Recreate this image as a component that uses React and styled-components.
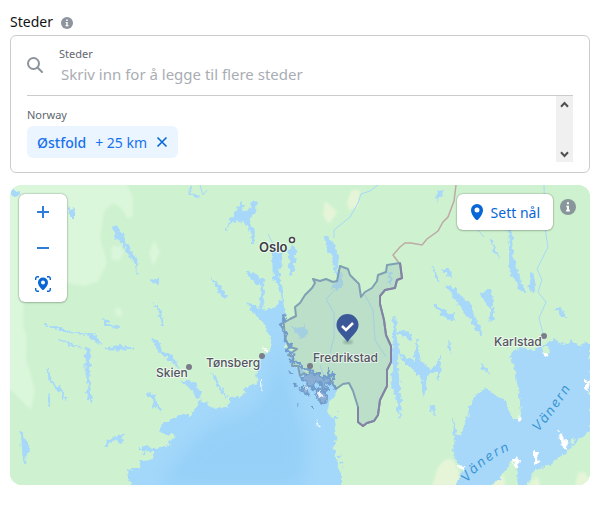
import React from "react";
import styled, { createGlobalStyle } from "styled-components";

const GlobalStyle = createGlobalStyle`
  * { box-sizing: border-box; }
  body {
    margin: 0;
    background: #fff;
    color: #111;
    font-family: "Noto Sans", "Open Sans", sans-serif;
  }
  button, input { font: inherit; }
  button { border: 0; padding: 0; cursor: pointer; }
`;

const Page = styled.main`
  padding: 8px 22px 32px 10px;
`;

const Heading = styled.h1`
  display: flex;
  align-items: center;
  gap: 8px;
  margin: 0;
  height: 27px;
  font-size: 14px;
  font-weight: 400;
`;

const InfoButton = styled.button`
  display: flex;
  margin-top: ${(p) => (p.$size > 12 ? "5px" : "3px")};
  border-radius: 50%;
  background: none;
`;

const Card = styled.section`
  border: 1px solid #ccc;
  border-radius: 6px;
  padding: 0 16px 10px;
`;

const SearchRow = styled.div`
  display: flex;
  align-items: center;
  gap: 16px;
  height: 60px;
  padding-bottom: 2px;
  border-bottom: 1px solid #ccc;
`;

const SearchField = styled.div`
  flex: 1;
  display: flex;
  flex-direction: column;
  padding-top: 3px;
`;

const FieldLabel = styled.label`
  color: #606770;
  font-size: 11px;
  line-height: 16px;
`;

const SearchInput = styled.input`
  width: 100%;
  height: 24px;
  border: 0;
  padding: 0 2px;
  outline: 0;
  background: none;
  font-size: 15px;
  &::placeholder { color: #a9adb3; opacity: 1; }
`;

const Results = styled.div`
  display: flex;
  justify-content: space-between;
  height: 66px;
`;

const Group = styled.div`
  padding-top: 10px;
`;

const Country = styled.div`
  color: #606770;
  font-size: 11px;
  line-height: 18px;
  padding-bottom: 2px;
`;

const Chip = styled.div`
  display: flex;
  align-items: center;
  height: 32px;
  padding: 0 10px;
  border-radius: 6px;
  background: #ebf5ff;
  color: #1771ed;
  font-size: 14px;
`;

const ChipName = styled.span`
  margin-right: 9px;
  font-weight: 500;
`;

const ChipRemove = styled.button`
  display: flex;
  margin-left: 9px;
  background: none;
`;

const ScrollTrack = styled.div`
  display: flex;
  flex-direction: column;
  justify-content: space-between;
  width: 17px;
  background: #f0f0f0;
`;

const ScrollButton = styled.button`
  display: flex;
  align-items: center;
  justify-content: center;
  height: 16px;
  background: none;
`;

const MapPanel = styled.section`
  position: relative;
  height: 300px;
  margin-top: 12px;
  border-radius: 12px;
  overflow: hidden;
  background: #cef2cf;
`;

const MapDrawing = styled.svg`
  display: block;
  width: 100%;
  height: 100%;
`;

const MapTools = styled.div`
  position: absolute;
  top: 9px;
  left: 9px;
  display: flex;
  flex-direction: column;
  width: 48px;
  border-radius: 6px;
  background: #fff;
  box-shadow: 0 0 2px rgba(0, 0, 0, 0.4), 0 1px 2px rgba(0, 0, 0, 0.15);
`;

const ToolButton = styled.button`
  display: flex;
  align-items: center;
  justify-content: center;
  height: 36px;
  background: none;
`;

const PinControls = styled.div`
  position: absolute;
  top: 9px;
  right: 14px;
  display: flex;
  align-items: flex-start;
  gap: 7px;
`;

const PinButton = styled.button`
  display: flex;
  align-items: center;
  gap: 8px;
  height: 36px;
  padding: 0 13px 0 14px;
  border-radius: 6px;
  background: #fff;
  color: #0866d6;
  font-size: 14px;
  box-shadow: 0 0 2px rgba(0, 0, 0, 0.4), 0 1px 2px rgba(0, 0, 0, 0.15);
`;

const CityLabel = styled.text`
  font-family: Inter, "Liberation Sans", sans-serif;
  font-size: ${(p) => (p.$capital ? "13px" : "12px")};
  font-weight: ${(p) => (p.$capital ? 600 : 500)};
  fill: ${(p) => (p.$capital ? "#3c3c48" : "#565563")};
  stroke: #fff;
  stroke-opacity: 0.6;
  stroke-width: 2px;
  stroke-linejoin: round;
  paint-order: stroke;
`;

const WaterLabel = styled.text`
  font-family: Inter, "Liberation Sans", sans-serif;
  font-size: 13px;
  font-style: italic;
  letter-spacing: 2px;
  fill: #3b94d3;
`;

function InfoIcon({ size, color }) {
  return (
    <svg width={size} height={size} viewBox="0 0 12 12" aria-hidden="true">
      <circle cx="6" cy="6" r="6" fill={color} />
      <path d="M4.700 5h2v3.100h.7V9.300H4.600V8.100h.7V6.100h-.6zM5.200 2.500h1.500V4H5.200z" fill="#fff" />
    </svg>
  );
}

function SearchIcon() {
  return (
    <svg width="16" height="16" viewBox="0 0 16 16" fill="none" stroke="#8d949e" strokeWidth="2" aria-hidden="true">
      <circle cx="6.500" cy="6.500" r="5.500" />
      <path d="M10.500 10.500 15 15" strokeLinecap="round" />
    </svg>
  );
}

function Chevron({ down }) {
  return (
    <svg width="9" height="7" viewBox="0 0 9 7" fill="none" stroke="#505050" strokeWidth="2" aria-hidden="true">
      <path d={down ? "M1 1.200 4.500 5 8 1.200" : "M1 5.800 4.500 2 8 5.800"} />
    </svg>
  );
}

function PinIcon() {
  return (
    <svg width="12" height="16" viewBox="0 0 12 16" aria-hidden="true">
      <path
        fill="#0866d6"
        fillRule="evenodd"
        d="M6 0a6 6 0 0 0-6 6c0 4 3.400 8.200 4.900 9.600a1.600 1.600 0 0 0 2.200 0C8.600 14.200 12 10 12 6a6 6 0 0 0-6-6Zm0 3.500a2.500 2.500 0 1 1 0 5 2.500 2.500 0 0 1 0-5Z"
      />
    </svg>
  );
}

function LocateIcon() {
  return (
    <svg width="16" height="16" viewBox="0 0 16 16" aria-hidden="true">
      <path
        d="M.7 4V2.500A1.800 1.800 0 0 1 2.500.7H4M12 .7h1.500a1.800 1.800 0 0 1 1.800 1.800V4M15.300 12v1.500a1.800 1.800 0 0 1-1.800 1.800H12M4 15.300H2.500A1.800 1.800 0 0 1 .7 13.500V12"
        fill="none"
        stroke="#0866d6"
        strokeWidth="1.400"
      />
      <path
        fill="#0866d6"
        fillRule="evenodd"
        d="M8 1.500a5 5 0 0 0-5 5c0 3 2.500 5.400 4.200 7.200q.8.700 1.600 0C10.500 11.900 13 9.500 13 6.500a5 5 0 0 0-5-5Zm0 3a2 2 0 1 1 0 4 2 2 0 0 1 0-4Z"
      />
    </svg>
  );
}

const SEA =
  "M130 487 128 470 140 468 139 462 150 460 155 451 140 450 140 446 153 448 166 448 175 435 160 434 162 424 176 418 178 415 190 415 198 405 201 399 212 408 227 407 229 398 242 397 245 387 257 383 256 372 262 357 270 350 272 342 268 333 265 325 255 315 247 302 261 310 275 307 282 300 279 284 273 279 272 256 269 252 280 253 284 252 279 276 283 290 283 302 286 316 281 326 286 339 284 347 293 352 292 364 302 369 307 378 318 383 330 378 335 388 341 384 329 403 328 412 334 420 336 438 334 448 338 468 342 475 342 487Z";

const DEEP_SEA =
  "M156 487 190 442 218 420 248 412 266 390 275 350 278 330 283 355 291 381 300 412 306 430 308 448 304 487Z";

const LAKE_VANERN =
  "M590 341 580 345 572 340 563 345 554 339 546 344 534 350 521 348 510 352 512 361 516 375 520 402 521 422 512 418 504 400 493 394 485 387 475 396 471 404 466 422 460 435 455 432 453 444 455 462 463 466 456 487 490 487 500 478 508 466 518 462 517 487 527 487 533 472 548 465 564 454 575 444 590 431Z";

const LAKES = [
  "M112 227 117 226 120 232 132 253 137 259 137 275 135 263 125 249 120 239 115 238 118 234Z",
  "M226 231 231 218 242 201 243 212 249 210 253 201 257 202 255 213 249 219 252 226 255 233 255 240 252 243 250 231 245 223 236 221 230 224Z",
  "M102 318 113 326 120 327 113 328 106 324Z",
  "M44 325 54 326 70 332 85 334 85 335 65 332Z",
  "M86 332 95 336 103 346 92 339Z",
  "M105 348 117 346 133 348 120 350 112 350Z",
  "M58 339 74 345 82 348 70 345Z",
  "M154 304 161 311 163 326 161 324 160 313Z",
  "M151 279 159 278 158 285 152 283Z",
  "M86 347 90 348 89 375 90 391 92 401 87 398 88 386 86 373Z",
  "M48 369 51 380 61 389 67 402 63 398 57 389 49 380Z",
  "M47 394 49 394 50 408 48 404Z",
  "M21 430 25 439 29 446 26 456 25 465 23 455Z",
  "M151 337 157 340 161 351 169 353 179 368 169 360 160 353Z",
  "M180 381 193 382 199 389 200 397 195 396 191 388Z",
  "M147 394 154 395 156 404 161 409 153 407 154 401Z",
  "M106 441 122 434 123 441 119 443 117 438 109 443 106 446Z",
  "M245 271 254 273 264 282 264 296 262 314 260 307 261 285 252 280Z",
  "M211 278 220 286 228 298 223 298Z",
  "M190 186 191 194 199 195 199 198 190 194Z",
  "M287 251 293 247 296 250 293 274 290 275 289 260Z",
  "M324 237 328 236 334 246 338 260 337 276 334 268 334 257 327 248Z",
  "M10 187 20 195 12 197Z",
  "M70 207 76 214 72 218 69 213Z",
  "M213 373 220 387 227 398 222 392 216 384Z",
  "M437 191 443 191 440 196 437 202Z",
  "M509 226 511 230 513 258 517 273 526 293 521 290 510 272Z",
  "M530 273 533 273 535 294 528 288 531 283Z",
  "M490 238 499 258 495 253Z",
  "M432 267 440 281 436 278Z",
  "M441 269 451 270 451 277 444 272Z",
  "M446 284 455 289 471 306 472 312 483 335 480 335 471 320 461 308Z",
  "M480 294 491 288 494 321 489 321 491 309Z",
  "M435 304 449 315 455 313 452 321 437 310Z",
  "M555 311 560 306 566 319 562 315 558 310Z",
  "M481 362 488 372 489 374 482 368Z",
  "M449 341 452 352 449 350Z",
  "M417 339 420 360 431 370 437 365 441 355 439 381 437 370 426 377 425 397 423 395 422 379 401 358 401 354 414 362Z",
  "M431 406 435 407 433 415Z",
  "M453 419 455 426 457 435 453 435Z",
  "M394 315 396 322 396 332 399 349 397 365 401 399 399 418 396 398 392 383 393 352Z",
  "M395 331 409 332 411 341 404 336Z",
  "M388 274 391 272 391 284 389 284Z",
  "M290 325 298 330 305 325 307 336 301 337 296 333Z",
  "M337 281 340 270 342 286 337 290 333 287Z",
];

const STREAMS = [
  "M334 238 334 230 350 217 358 203 361 194 370 191 378 185",
  "M338 287 326 299 334 313 334 337 330 353",
  "M365 295 373 310 375 340 386 357",
  "M544 185 545 228 548 247 537 269 542 280 538 292 546 302 539 318 544 337",
  "M200 185 203 195 207 190",
  "M478 230 484 237",
  "M268 234 276 250 280 262",
  "M320 365 325 379",
];

const COUNTY =
  "M283 315 285 322 290 319 296 316 295 307 300 303 305 295 312 288 315 283 313 279 320 281 326 279 333 282 337 281 340 266 348 269 350 275 359 284 361 297 365 292 372 288 377 281 378 275 386 272 387 265 400 263 402 278 397 280 395 288 385 290 380 296 380 304 384 320 386 335 391 346 391 362 387 370 387 386 380 400 378 415 374 421 367 423 363 426 358 422 358 407 353 391 349 383 343 384 336 389 332 383 329 377 324 382 317 374 311 379 304 373 300 376 298 366 292 366 293 357 288 355 297 349 289 347 285 338Z";

const EAST_BORDER =
  "M400 263 402 278 397 280 395 288 385 290 380 296 380 304 384 320 386 335 391 346 391 362 387 370 387 386 380 400 378 415 374 421 367 423 363 426 358 422 358 407";

const COUNTY_COAST =
  "M283 314 285 320 281 325 284 331 287 335 285 341 291 345 286 350 294 355 291 362 299 362 302 370 311 369 309 379 317 374 319 384 328 381 329 371 334 379 333 385 337 388";

const ISLANDS =
  "M301 379l5 2 1 6 5-1 2 5 6-3 2 5 5-3-2-5 5-3-1-6-6 3-4-5-5 1-2-4zM313 386l4-5 5 3 1 8-6 3zM317 391l7-1 4 6-3 9-6-4zM292 383l5 4M300 390l6-4 2 9zM288 371l5 3M296 405l3 1M311 407l3 0";

const SHALLOWS =
  "M315 420l3 3 3 5-4-3zM262 347l5 2 2 3-4 0zM261 381l1 0 1 10-2 1zM534 451l5 0-1 12-4 3zM558 430l4 3 2 8 4-1-1 10-6-5zM543 352l6 3-4 3zM519 414l3 4-2 4-3-1zM585 380l5 1-2 12-3-5zM513 460l6-2-1 10-4-3zM457 465l9 1-4 6z";

const CITIES = [
  { name: "Oslo", x: 259, y: 252, dotX: 292, dotY: 240, capital: true },
  { name: "Tønsberg", x: 206, y: 367, dotX: 262, dotY: 356 },
  { name: "Skien", x: 156, y: 377, dotX: 189, dotY: 367 },
  { name: "Fredrikstad", x: 313, y: 362, dotX: 310, dotY: 366 },
  { name: "Karlstad", x: 494, y: 346, dotX: 544, dotY: 336 },
];

function RegionMap() {
  return (
    <MapDrawing viewBox="10 185 580 300" preserveAspectRatio="xMidYMid slice" role="img" aria-label="Kart over Østfold">
      <defs>
        <filter id="coast" x="-5%" y="-5%" width="110%" height="110%" colorInterpolationFilters="sRGB">
          <feTurbulence type="fractalNoise" baseFrequency="0.22" numOctaves="2" seed="4" />
          <feDisplacementMap in="SourceGraphic" scale="7" xChannelSelector="R" yChannelSelector="G" />
        </filter>
        <filter id="soft" x="-20%" y="-20%" width="140%" height="140%"><feGaussianBlur stdDeviation="9" /></filter>
        <filter id="edge"><feGaussianBlur stdDeviation="1" /></filter>
        <path id="vanern-west" d="M467 483Q484 459 520 446" />
        <path id="vanern-east" d="M538 432Q558 410 578 376" />
        <clipPath id="sea-clip"><path d={SEA} /></clipPath>
      </defs>
      <rect x="10" y="185" width="580" height="300" fill="#cef2cf" />
      <g filter="url(#edge)">
        <path
          fill="#daf6db"
          d="M8 183H126L133 197 133 216 128 219 121 208 113 203 104 211 100 238 107 262 98 282 84 286 66 283 24 303 23 325 27 338 26 358 35 390 31 410 8 387Z"
        />
        <path fill="#daf6db" d="M112 246l9 0 2 8-4 7-8-2zM154 240l6 12-7 14-4-13zM115 308l6 0 1 8-6 0z" />
        <path
          fill="#e6f5d8"
          d="M325 201 337 212 329 224 323 215ZM352 190 360 190 358 207 349 210 347 202ZM432 487 438 467 445 460 452 459 458 470 461 487ZM497 480 504 475 505 487 492 487ZM527 487 537 476 541 487ZM575 487 578 473 584 472 590 480 590 487Z"
        />
      </g>
      <g filter="url(#coast)">
        <path d={SEA} fill="#a4d8fa" />
        <path d={LAKE_VANERN} fill="#a7d8f9" />
        {LAKES.map((d) => <path key={d} d={d} fill="#a7d8f9" stroke="#a7d8f9" strokeWidth="1" />)}
        <path d="M508 464l7-3 3 6-2 6-7-1zM543 347l5 0 1 5-4 2zM568 441l7-3-3 8z" fill="#cef2cf" />
        <path
          d="M166 432l4-5 8-2M132 480l11-8 6 0M142 454l8-3M338 410l-5 14M332 432l4 11M339 455l3 12"
          stroke="#a4d8fa"
          strokeWidth="3"
          strokeDasharray="3 3"
          fill="none"
        />
        <path d={SHALLOWS} fill="#fff" />
      </g>
      <g clipPath="url(#sea-clip)">
        <path d={DEEP_SEA} fill="#96d0f8" filter="url(#soft)" />
      </g>
      <g fill="none" stroke="#a7d8f9">
        {STREAMS.map((d) => <path key={d} d={d} />)}
      </g>
      <path
        d="M456 185 454 201 448 217 443 222 438 231 427 239 422 245 411 243 405 243 400 247 393 255 399 263"
        fill="none"
        stroke="#bda9a5"
        strokeWidth="1.500"
      />
      <path d={COUNTY} fill="#a1c4bd" fillOpacity="0.4" stroke="#7f9fb5" strokeWidth="2" strokeLinejoin="round" />
      <path d={EAST_BORDER} fill="none" stroke="#8582a3" strokeWidth="2" />
      <g filter="url(#coast)">
        <path d={COUNTY_COAST} fill="none" stroke="#719dcc" strokeWidth="2.500" />
        <path d={ISLANDS} fill="#8aaed3" stroke="#719dcc" strokeWidth="2" />
        <path d="M317 392l4-2 0 4 3 2-5 3zM305 385l3 1-2 4z" fill="#eef0fa" />
      </g>
      {CITIES.map((c) => (
        <g key={c.name}>
          <circle
            cx={c.dotX}
            cy={c.dotY}
            r={c.capital ? 2.5 : 3}
            fill={c.capital ? "#fff" : "#7b7d8b"}
            stroke={c.capital ? "#44434f" : "none"}
            strokeWidth="1.500"
          />
          <CityLabel x={c.x} y={c.y} $capital={c.capital}>{c.name}</CityLabel>
        </g>
      ))}
      <WaterLabel><textPath href="#vanern-west">Vänern</textPath></WaterLabel>
      <WaterLabel><textPath href="#vanern-east">Vänern</textPath></WaterLabel>
      <ellipse cx="348" cy="342" rx="5" ry="2" fill="#6e8a86" opacity="0.5" filter="url(#edge)" />
      <path d="M347.500 314a11 11 0 0 0-11 11c0 6 5 9 11 17 6-8 11-11 11-17a11 11 0 0 0-11-11Z" fill="#3b5998" />
      <path d="m342 326 4 4 7-7" fill="none" stroke="#fff" strokeWidth="2.500" />
    </MapDrawing>
  );
}

export default function App() {
  return (
    <>
      <GlobalStyle />
      <Page>
        <Heading>
          Steder
          <InfoButton type="button" aria-label="Informasjon om steder" $size={12}>
            <InfoIcon size={12} color="#8d949e" />
          </InfoButton>
        </Heading>
        <Card>
          <SearchRow>
            <SearchIcon />
            <SearchField>
              <FieldLabel htmlFor="places">Steder</FieldLabel>
              <SearchInput id="places" type="text" placeholder="Skriv inn for å legge til flere steder" />
            </SearchField>
          </SearchRow>
          <Results>
            <Group>
              <Country>Norway</Country>
              <Chip>
                <ChipName>Østfold</ChipName>
                + 25 km
                <ChipRemove type="button" aria-label="Fjern Østfold">
                  <svg width="12" height="12" viewBox="0 0 12 12" stroke="#0866d6" strokeWidth="1.600" aria-hidden="true">
                    <path d="m1.500 1.500 9 9m0-9-9 9" />
                  </svg>
                </ChipRemove>
              </Chip>
            </Group>
            <ScrollTrack>
              <ScrollButton type="button" aria-label="Rull opp"><Chevron /></ScrollButton>
              <ScrollButton type="button" aria-label="Rull ned"><Chevron down /></ScrollButton>
            </ScrollTrack>
          </Results>
        </Card>
        <MapPanel>
          <RegionMap />
          <MapTools>
            <ToolButton type="button" aria-label="Zoom inn">
              <svg width="12" height="12" viewBox="0 0 12 12" stroke="#2f7ddb" strokeWidth="2" aria-hidden="true">
                <path d="M0 6h12M6 0v12" />
              </svg>
            </ToolButton>
            <ToolButton type="button" aria-label="Zoom ut">
              <svg width="12" height="12" viewBox="0 0 12 12" stroke="#2f7ddb" strokeWidth="2" aria-hidden="true">
                <path d="M0 6h12" />
              </svg>
            </ToolButton>
            <ToolButton type="button" aria-label="Vis området"><LocateIcon /></ToolButton>
          </MapTools>
          <PinControls>
            <PinButton type="button"><PinIcon />Sett nål</PinButton>
            <InfoButton type="button" aria-label="Informasjon om nåler" $size={16}>
              <InfoIcon size={16} color="#88969b" />
            </InfoButton>
          </PinControls>
        </MapPanel>
      </Page>
    </>
  );
}
